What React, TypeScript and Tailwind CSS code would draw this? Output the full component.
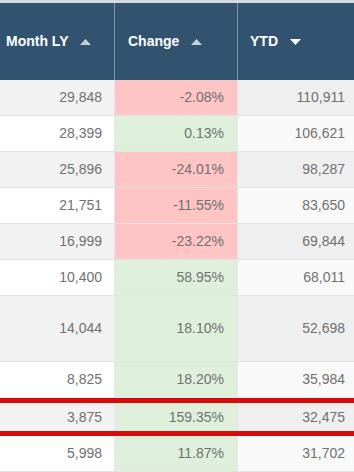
const rows = [
  { ly: "29,848", change: "-2.08%", ytd: "110,911", tall: false },
  { ly: "28,399", change: "0.13%", ytd: "106,621", tall: false },
  { ly: "25,896", change: "-24.01%", ytd: "98,287", tall: false },
  { ly: "21,751", change: "-11.55%", ytd: "83,650", tall: false },
  { ly: "16,999", change: "-23.22%", ytd: "69,844", tall: false },
  { ly: "10,400", change: "58.95%", ytd: "68,011", tall: false },
  { ly: "14,044", change: "18.10%", ytd: "52,698", tall: true },
  { ly: "8,825", change: "18.20%", ytd: "35,984", tall: false },
  { ly: "3,875", change: "159.35%", ytd: "32,475", tall: false },
  { ly: "5,998", change: "11.87%", ytd: "31,702", tall: false },
];

const Caret = ({ down }: { down?: boolean }) => (
  <svg width="11" height="6" viewBox="0 0 11 6" className="ml-3">
    <path d={down ? "M0 0 L11 0 L5.5 6 Z" : "M0 6 L11 6 L5.5 0 Z"} fill={down ? "#ffffff" : "#c5d0da"} />
  </svg>
);

export default function App() {
  return (
    <div className="w-[354px] h-[472px] overflow-hidden bg-white font-['Liberation_Sans',Arial,sans-serif] text-[14px]">
      <div className="h-[3px] bg-[#d3dbe2]" />
      <div className="grid grid-cols-[115px_123px_1fr] h-[77px] bg-[#31536f] text-white font-bold">
        <div className="flex items-center pl-[6px] border-r border-[#7e96aa]">
          Month LY <Caret />
        </div>
        <div className="flex items-center pl-[13px] border-r border-[#7e96aa]">
          Change <Caret />
        </div>
        <div className="flex items-center pl-[12px]">
          YTD <Caret down />
        </div>
      </div>
      {rows.map((r, i) => {
        const odd = i % 2 === 0;
        const neg = r.change.startsWith("-");
        const marked = i === 8;
        return (
          <div
            key={i}
            className={`grid grid-cols-[115px_123px_1fr] text-[#707070] ${
              r.tall ? "h-[66px]" : marked ? "h-[38px]" : "h-[36px]"
            } ${odd ? "bg-[#f2f2f2]" : "bg-white"} ${
              marked ? "border-y-[5px] border-[#d60c0c]" : "border-b border-[#e3e3e3]"
            }`}
          >
            <div className="flex items-center justify-end pr-[12px] border-r border-[#e6e6e6]">{r.ly}</div>
            <div
              className={`flex items-center justify-end pr-[13px] border-r border-[#e6e6e6] ${
                neg ? "bg-[#ffc4c4]" : "bg-[#def0dc]"
              }`}
            >
              {r.change}
            </div>
            <div className={`flex items-center justify-end pr-[9px] ${odd ? "bg-[#efefef]" : "bg-[#f9f9f9]"}`}>
              {r.ytd}
            </div>
          </div>
        );
      })}
    </div>
  );
}
